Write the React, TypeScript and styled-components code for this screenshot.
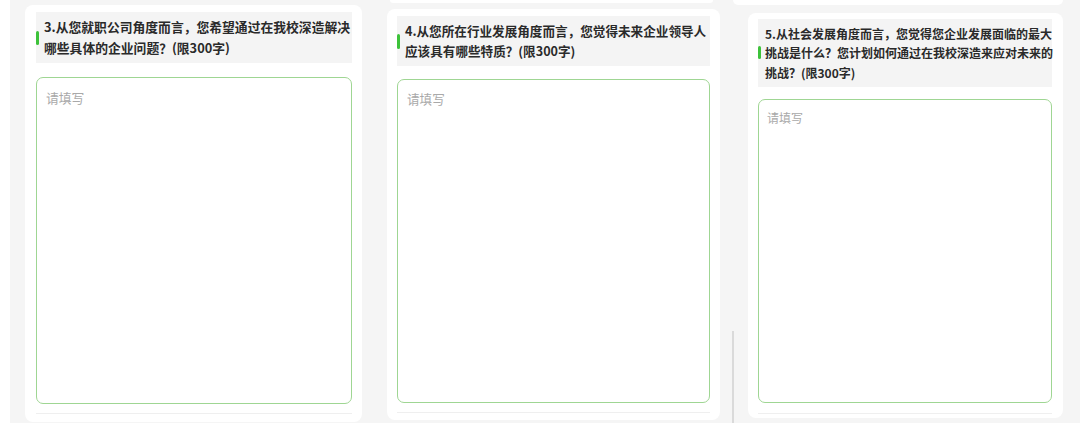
import React from 'react';
import styled, { createGlobalStyle } from 'styled-components';

const GlobalStyle = createGlobalStyle`
  html, body { margin: 0; padding: 0; background: #ffffff; }
  body { font-family: "Noto Sans CJK SC", "Noto Sans", sans-serif; }
  * { box-sizing: border-box; }
`;

const Page = styled.div`
  display: flex;
  width: 1080px;
  height: 423px;
  overflow: hidden;
  background: #ffffff;
`;

const Panel = styled.section<{ $ml: number; $w?: number }>`
  position: relative;
  display: flex;
  flex-direction: column;
  margin-left: ${(p) => p.$ml}px;
  ${(p) => (p.$w ? `width: ${p.$w}px; flex: none;` : 'flex: 1;')}
  height: 423px;
  background: #f5f5f5;
`;

const PrevTail = styled.div<{ $ml: number; $w: number; $h: number }>`
  margin-left: ${(p) => p.$ml}px;
  width: ${(p) => p.$w}px;
  height: ${(p) => p.$h}px;
  background: #ffffff;
  border-radius: 0 0 6px 6px;
  flex: none;
`;

const ScrollLine = styled.div`
  position: absolute;
  left: -1px;
  top: 331px;
  bottom: 0;
  width: 2px;
  background: #dadada;
`;

const Card = styled.div<{ $mt: number; $ml: number; $w: number; $h: number; $pad: string }>`
  display: flex;
  flex-direction: column;
  margin-top: ${(p) => p.$mt}px;
  margin-left: ${(p) => p.$ml}px;
  width: ${(p) => p.$w}px;
  height: ${(p) => p.$h}px;
  padding: ${(p) => p.$pad};
  background: #ffffff;
  border-radius: 8px;
  flex: none;
`;

const QuestionHead = styled.div<{ $pad: number; $gap: number }>`
  display: flex;
  align-items: center;
  gap: ${(p) => p.$gap}px;
  padding: ${(p) => p.$pad}px 0;
  background: #f4f4f4;
`;

const GreenBar = styled.span<{ $h: number }>`
  flex: none;
  width: 3px;
  height: ${(p) => p.$h}px;
  border-radius: 2px;
  background: #3dc23a;
`;

const QuestionText = styled.div<{ $fs: number; $lh: number }>`
  font-size: ${(p) => p.$fs}px;
  line-height: ${(p) => p.$lh}px;
  font-weight: 700;
  color: #2a2a2a;
  white-space: nowrap;
`;

const Answer = styled.textarea<{ $mt: number; $fs: number; $pt: number; $pl: number }>`
  flex: 1;
  display: block;
  width: 100%;
  margin: ${(p) => p.$mt}px 0 0 0;
  padding: ${(p) => p.$pt}px ${(p) => p.$pl}px;
  border: 1px solid #9fd693;
  border-radius: 7px;
  background: #ffffff;
  font-family: "Noto Sans CJK SC", "Noto Sans", sans-serif;
  font-size: ${(p) => p.$fs}px;
  line-height: 20px;
  color: #333;
  resize: none;
  outline: none;
  &::placeholder { color: #a9a9a9; }
`;

const Divider = styled.div<{ $mt: number }>`
  flex: none;
  margin-top: ${(p) => p.$mt}px;
  height: 1px;
  background: #efefef;
`;

type Q = {
  lines: string[];
  fs: number;
  lh: number;
  headPad: number;
  barH: number;
  barGap: number;
  card: { mt: number; ml: number; w: number; h: number; pad: string };
  ta: { mt: number; pt: number; pl: number };
  divMt: number;
};

const Question: React.FC<{ q: Q }> = ({ q }) => (
  <Card $mt={q.card.mt} $ml={q.card.ml} $w={q.card.w} $h={q.card.h} $pad={q.card.pad}>
    <QuestionHead $pad={q.headPad} $gap={q.barGap}>
      <GreenBar $h={q.barH} />
      <QuestionText $fs={q.fs} $lh={q.lh}>
        {q.lines.map((l, i) => (
          <React.Fragment key={i}>
            {i > 0 && <br />}
            {l}
          </React.Fragment>
        ))}
      </QuestionText>
    </QuestionHead>
    <Answer $mt={q.ta.mt} $fs={q.fs} $pt={q.ta.pt} $pl={q.ta.pl} placeholder="请填写" />
    <Divider $mt={q.divMt} />
  </Card>
);

const q1: Q = {
  lines: ['3.从您就职公司角度而言，您希望通过在我校深造解决', '哪些具体的企业问题？(限300字)'],
  fs: 12.8,
  lh: 20.5,
  headPad: 5,
  barH: 14,
  barGap: 5,
  card: { mt: 5, ml: 15, w: 337, h: 417, pad: '7px 10px 8px 11px' },
  ta: { mt: 14, pt: 10, pl: 9 },
  divMt: 9,
};

const q2: Q = {
  lines: ['4.从您所在行业发展角度而言，您觉得未来企业领导人', '应该具有哪些特质？(限300字)'],
  fs: 12.6,
  lh: 20,
  headPad: 5,
  barH: 15,
  barGap: 5,
  card: { mt: 6, ml: 15, w: 333, h: 411, pad: '7px 10px 7px 10px' },
  ta: { mt: 13, pt: 9, pl: 9 },
  divMt: 9,
};

const q3: Q = {
  lines: [
    '5.从社会发展角度而言，您觉得您企业发展面临的最大',
    '挑战是什么？您计划如何通过在我校深造来应对未来的',
    '挑战？(限300字)',
  ],
  fs: 12,
  lh: 19.5,
  headPad: 4.5,
  barH: 13,
  barGap: 4,
  card: { mt: 8, ml: 15, w: 315, h: 405, pad: '6px 11px 4px 10px' },
  ta: { mt: 12, pt: 8, pl: 8 },
  divMt: 10,
};

export default function App() {
  return (
    <>
      <GlobalStyle />
      <Page>
        <Panel $ml={10} $w={362}>
          <Question q={q1} />
        </Panel>
        <Panel $ml={0} $w={361}>
          <PrevTail $ml={18} $w={323} $h={3} />
          <Question q={q2} />
        </Panel>
        <Panel $ml={0}>
          <ScrollLine />
          <PrevTail $ml={0} $w={330} $h={5} />
          <Question q={q3} />
        </Panel>
      </Page>
    </>
  );
}
